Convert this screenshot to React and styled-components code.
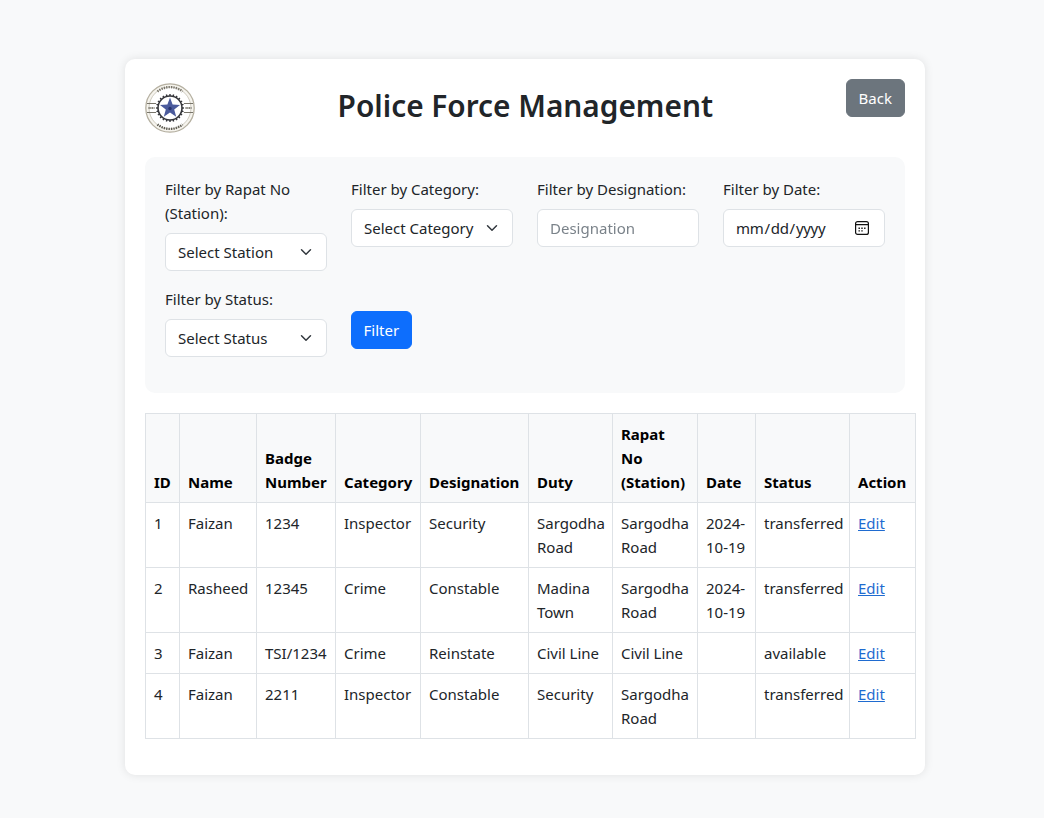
import styled, { createGlobalStyle } from 'styled-components';

const FONT = `"Noto Sans", "Open Sans", sans-serif`;
const CHEVRON = `url("data:image/svg+xml,%3csvg xmlns='http://www.w3.org/2000/svg' viewBox='0 0 16 16'%3e%3cpath fill='none' stroke='%23343a40' stroke-linecap='round' stroke-linejoin='round' stroke-width='2' d='m2 5 6 6 6-6'/%3e%3c/svg%3e")`;
const CALENDAR = `url("data:image/svg+xml,%3csvg xmlns='http://www.w3.org/2000/svg' viewBox='0 0 14 14'%3e%3crect x='.6' y='.6' width='12.800' height='12.800' rx='2' fill='none' stroke='%23111' stroke-width='1.200'/%3e%3cpath d='M1 3.600h12' stroke='%23111' stroke-width='1.400'/%3e%3cpath d='M3.500 6.500h1.400v1.400H3.500zM6.300 6.500h1.400v1.400H6.300zM9.100 6.500h1.400v1.400H9.100zM3.500 9.200h1.400v1.400H3.500zM6.300 9.200h1.400v1.400H6.300z' fill='%23111'/%3e%3c/svg%3e")`;

const GlobalStyle = createGlobalStyle`
  html, body {
    margin: 0;
    padding: 0;
    background-color: #f8f9fa;
    font-family: ${FONT};
    font-size: 15px;
    line-height: 24px;
    color: #212529;
  }
  * {
    box-sizing: border-box;
  }
`;

const Page = styled.div`
  display: flex;
  justify-content: center;
  padding: 59px 0 43px 6px;
`;

const Card = styled.div`
  width: 800px;
  height: 716px;
  padding: 20px;
  background-color: #fff;
  border-radius: 10px;
  box-shadow: 0 0 10px rgba(0, 0, 0, 0.1);
`;

const Header = styled.div`
  display: flex;
  justify-content: space-between;
  align-items: flex-start;
  height: 54px;
  margin-bottom: 24px;
`;

const LogoWrap = styled.div`
  width: 50px;
  height: 50px;
  margin-top: 4px;
  flex-shrink: 0;
`;

const Title = styled.h1`
  margin: 7px 0 0 10px;
  font-size: 29.8px;
  line-height: 40px;
  font-weight: 600;
  color: #212529;
`;

const Button = styled.button`
  height: 38px;
  padding: 0 ${(props) => props.$padX || 12}px;
  border: 1px solid ${(props) => props.$color};
  border-radius: 6px;
  background-color: ${(props) => props.$color};
  color: #fff;
  font-family: ${FONT};
  font-size: 15px;
  line-height: 24px;
`;

const FilterPanel = styled.div`
  display: grid;
  grid-template-columns: repeat(4, 162px);
  column-gap: 24px;
  align-items: start;
  padding: 20px;
  margin-bottom: 20px;
  background-color: #f8f9fa;
  border-radius: 10px;
`;

const Field = styled.div`
  margin-bottom: 16px;
`;

const Label = styled.label`
  display: block;
  margin-bottom: 8px;
  font-size: 15px;
  line-height: 24px;
`;

const Select = styled.select`
  display: block;
  width: 100%;
  height: 38px;
  padding: 0 36px 0 12px;
  appearance: none;
  border: 1px solid #dee2e6;
  border-radius: 6px;
  background: #fff ${CHEVRON} no-repeat right 12px center / 16px 12px;
  font-family: ${FONT};
  font-size: 15px;
  color: #212529;
`;

const Input = styled.input`
  display: block;
  width: 100%;
  height: 38px;
  padding: 0 12px;
  border: 1px solid #dee2e6;
  border-radius: 6px;
  background-color: #fff;
  font-family: ${FONT};
  font-size: 15px;
  color: #212529;
  &::placeholder {
    color: #6c757d;
    opacity: 0.9;
  }
  &::-webkit-datetime-edit {
    margin-left: -1px;
    letter-spacing: -0.3px;
  }
  &::-webkit-calendar-picker-indicator {
    width: 16px;
    height: 16px;
    margin: 0 2px 0 0;
    padding: 0;
    background: ${CALENDAR} no-repeat center / 14px 14px;
  }
`;

const FilterAction = styled.div`
  margin-top: 24px;
`;

const Table = styled.table`
  width: 770px;
  table-layout: fixed;
  border-collapse: collapse;
  font-size: 15px;
  line-height: 24px;
`;

const HeadCell = styled.th`
  padding: 8px;
  border: 1px solid #dee2e6;
  background-color: #f8f9fa;
  color: #000;
  font-weight: 700;
  text-align: left;
  vertical-align: bottom;
`;

const Cell = styled.td`
  padding: 8px;
  border: 1px solid #dee2e6;
  color: #212529;
  vertical-align: top;
`;

const EditLink = styled.a`
  color: #1f6bd0;
  text-decoration: underline;
`;

const COLUMNS = [
  ['ID', 34],
  ['Name', 77],
  ['Badge Number', 79],
  ['Category', 85],
  ['Designation', 108],
  ['Duty', 84],
  ['Rapat No (Station)', 85],
  ['Date', 58],
  ['Status', 94],
  ['Action', 66],
];

const ROWS = [
  ['1', 'Faizan', '1234', 'Inspector', 'Security', 'Sargodha Road', 'Sargodha Road', '2024-10-19', 'transferred'],
  ['2', 'Rasheed', '12345', 'Crime', 'Constable', 'Madina Town', 'Sargodha Road', '2024-10-19', 'transferred'],
  ['3', 'Faizan', 'TSI/1234', 'Crime', 'Reinstate', 'Civil Line', 'Civil Line', '', 'available'],
  ['4', 'Faizan', '2211', 'Inspector', 'Constable', 'Security', 'Sargodha Road', '', 'transferred'],
];

const GEAR_TEETH = Array.from({ length: 24 }, (_, i) => (i * 360) / 24);

function Logo() {
  return (
    <svg width="50" height="50" viewBox="0 0 50 50" style={{ filter: 'blur(0.6px)' }}>
      <circle cx="25" cy="25" r="24.2" fill="#f6f4ee" stroke="#b5b0a1" strokeWidth="1.300" />
      <circle cx="25" cy="25" r="21" fill="#fff" stroke="#bdb9ab" strokeWidth="0.700" />
      <path d="M2 20.500h9M2 29.500h9M39 20.500h9M39 29.500h9" stroke="#77746a" strokeWidth="1" />
      <path d="M12.500 8.500a20 20 0 0 1 25 0" fill="none" stroke="#77746a" strokeWidth="2.400" strokeDasharray="1.300 1.100" />
      <path d="M12.500 41.500a20 20 0 0 0 25 0" fill="none" stroke="#5d5b53" strokeWidth="2.400" strokeDasharray="1.300 1.100" />
      <path d="M3.500 25h6M40.500 25h6" stroke="#77746a" strokeWidth="2" strokeDasharray="1.200 0.600" />
      {GEAR_TEETH.map((angle) => (
        <rect key={angle} x="24.300" y="11" width="1.400" height="2" fill="#34353a" transform={`rotate(${angle} 25 25)`} />
      ))}
      <circle cx="25" cy="25" r="12" fill="#fff" stroke="#34353a" strokeWidth="1.600" />
      <path
        d="M25 14.500l2.600 7 7.400.4-5.800 4.600 2 7.200-6.200-4.100-6.200 4.100 2-7.200-5.800-4.600 7.400-.4z"
        fill="#4a5a9c"
      />
      <circle cx="25" cy="25.500" r="1.700" fill="#27346e" />
    </svg>
  );
}

export default function App() {
  return (
    <>
      <GlobalStyle />
      <Page>
        <Card>
          <Header>
            <LogoWrap>
              <Logo />
            </LogoWrap>
            <Title>Police Force Management</Title>
            <Button $color="#6c757d">Back</Button>
          </Header>

          <FilterPanel>
            <Field>
              <Label>Filter by Rapat No (Station):</Label>
              <Select defaultValue="">
                <option value="">Select Station</option>
              </Select>
            </Field>
            <Field>
              <Label>Filter by Category:</Label>
              <Select defaultValue="">
                <option value="">Select Category</option>
              </Select>
            </Field>
            <Field>
              <Label>Filter by Designation:</Label>
              <Input type="text" placeholder="Designation" />
            </Field>
            <Field>
              <Label>Filter by Date:</Label>
              <Input type="date" />
            </Field>
            <Field>
              <Label>Filter by Status:</Label>
              <Select defaultValue="">
                <option value="">Select Status</option>
              </Select>
            </Field>
            <FilterAction>
              <Button $color="#0d6efd" $padX={11.5}>Filter</Button>
            </FilterAction>
          </FilterPanel>

          <Table>
            <colgroup>
              {COLUMNS.map(([name, width]) => (
                <col key={name} style={{ width }} />
              ))}
            </colgroup>
            <thead>
              <tr>
                {COLUMNS.map(([name]) => (
                  <HeadCell key={name}>{name}</HeadCell>
                ))}
              </tr>
            </thead>
            <tbody>
              {ROWS.map((row) => (
                <tr key={row[0]}>
                  {row.map((value, i) => (
                    <Cell key={i}>{value}</Cell>
                  ))}
                  <Cell>
                    <EditLink href="#">Edit</EditLink>
                  </Cell>
                </tr>
              ))}
            </tbody>
          </Table>
        </Card>
      </Page>
    </>
  );
}
